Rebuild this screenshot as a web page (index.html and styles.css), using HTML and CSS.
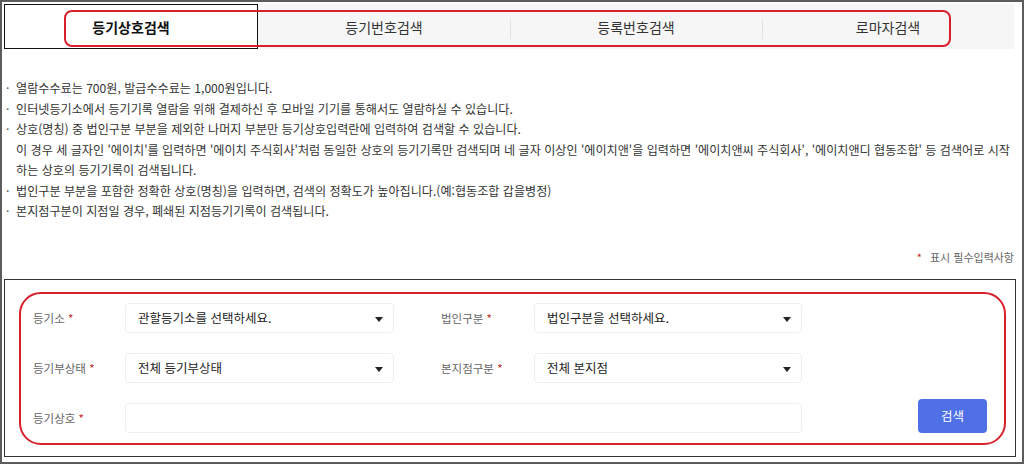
FILE: index.html
```html
<!DOCTYPE html>
<html lang="ko">
<head>
<meta charset="utf-8">
<title>등기상호검색</title>
<link rel="stylesheet" href="styles.css">
</head>
<body>
<div class="frame">
  <div class="tabs">
    <div class="tab active">등기상호검색</div>
    <div class="tab">등기번호검색</div>
    <div class="tab">등록번호검색</div>
    <div class="tab">로마자검색</div>
    <div class="annot annot-tabs"></div>
  </div>

  <ul class="notes">
    <li>열람수수료는 700원, 발급수수료는 1,000원입니다.</li>
    <li>인터넷등기소에서 등기기록 열람을 위해 결제하신 후 모바일 기기를 통해서도 열람하실 수 있습니다.</li>
    <li>상호(명칭) 중 법인구분 부분을 제외한 나머지 부분만 등기상호입력란에 입력하여 검색할 수 있습니다.<br>이 경우 세 글자인 '에이치'를 입력하면 '에이치 주식회사'처럼 동일한 상호의 등기기록만 검색되며 네 글자 이상인 '에이치앤'을 입력하면 '에이치앤씨 주식회사', '에이치앤디 협동조합' 등 검색어로 시작하는 상호의 등기기록이 검색됩니다.</li>
    <li>법인구분 부분을 포함한 정확한 상호(명칭)을 입력하면, 검색의 정확도가 높아집니다.(예:협동조합 갑을병정)</li>
    <li>본지점구분이 지점일 경우, 폐쇄된 지점등기기록이 검색됩니다.</li>
  </ul>

  <p class="req"><span class="star">*</span> 표시 필수입력사항</p>

  <div class="form">
    <div class="grid">
      <div class="label c1">등기소 <span class="star">*</span></div>
      <div class="select c2">관할등기소를 선택하세요.<span class="caret"></span></div>
      <div class="label c4">법인구분 <span class="star">*</span></div>
      <div class="select c5">법인구분을 선택하세요.<span class="caret"></span></div>

      <div class="label c1">등기부상태 <span class="star">*</span></div>
      <div class="select c2">전체 등기부상태<span class="caret"></span></div>
      <div class="label c4">본지점구분 <span class="star">*</span></div>
      <div class="select c5">전체 본지점<span class="caret"></span></div>

      <div class="label c1">등기상호 <span class="star">*</span></div>
      <div class="input wide"></div>
      <button class="btn" type="button">검색</button>
    </div>
    <div class="annot annot-form"></div>
  </div>
</div>
</body>
</html>
```

FILE: styles.css
```css
* { box-sizing: border-box; }
html, body { margin: 0; padding: 0; background: #fff; }
body {
  font-family: "Noto Sans CJK KR", "Noto Sans", sans-serif;
  color: #333;
}
.frame {
  width: 1024px;
  height: 464px;
  border: 2px solid #5c5c5c;
  padding: 2px 8px 0 2px;
  overflow: hidden;
}

/* tabs */
.tabs {
  position: relative;
  display: flex;
  height: 45px;
  background: #f6f6f6;
}
.tab {
  flex: 1;
  display: flex;
  align-items: center;
  justify-content: center;
  font-size: 14px;
  color: #333;
  position: relative;
}
.tab + .tab + .tab::before {
  content: "";
  position: absolute;
  left: 0;
  top: 15px;
  height: 20px;
  border-left: 1px solid #e2e2e2;
}
.tab.active {
  background: #fff;
  border: 1px solid #111;
  font-weight: 700;
  color: #111;
}

.annot {
  position: absolute;
  border: 2px solid #d8202a;
  pointer-events: none;
}
.annot-tabs {
  left: 60px;
  top: 6px;
  width: 887px;
  height: 37px;
  border-radius: 8px;
}

/* notes */
.notes {
  list-style: none;
  margin: 29px 0 0 0;
  padding: 0 0 0 12px;
  font-size: 12.1px;
  line-height: 20.5px;
  color: #333;
}
.notes li {
  position: relative;
}
.notes li::before {
  content: "·";
  position: absolute;
  left: -10px;
  top: 0;
  color: #555;
}

.req {
  margin: 25px 0 0 0;
  text-align: right;
  font-size: 11px;
  line-height: 20px;
  color: #666;
}
.star { color: #c0262d; margin-right: 5px; }
.label .star { margin-right: 0; margin-left: 0; }

/* form */
.form {
  position: relative;
  margin-top: 12px;
  width: 1012px;
  height: 178px;
  border: 1px solid #333;
  padding: 23px 0 0 28px;
}
.grid {
  display: grid;
  grid-template-columns: 92px 269px 47px 93px 268px 116px 69px;
  grid-auto-rows: 30px;
  row-gap: 20px;
  align-items: center;
}
.c1 { grid-column: 1; }
.c2 { grid-column: 2; }
.c4 { grid-column: 4; }
.c5 { grid-column: 5; }
.label {
  font-size: 11.5px;
  color: #666;
}
.select, .input {
  height: 30px;
  border: 1px solid #eeeeee;
  border-radius: 4px;
  background: #fff;
  font-size: 12.5px;
  color: #222;
  padding: 0 0 0 12px;
  display: flex;
  align-items: center;
  position: relative;
}
.caret {
  position: absolute;
  right: 10px;
  top: 13px;
  width: 0;
  height: 0;
  border-left: 4px solid transparent;
  border-right: 4px solid transparent;
  border-top: 5px solid #222;
}
.wide { grid-column: 2 / 6; }
.btn {
  grid-column: 7;
  align-self: end;
  margin-top: -4px;
  height: 34px;
  width: 69px;
  border: none;
  border-radius: 4px;
  background: #5070e6;
  color: #fff;
  font-family: inherit;
  font-size: 12.5px;
  padding: 0;
}
.annot-form {
  left: 14px;
  top: 12px;
  width: 987px;
  height: 153px;
  border-radius: 22px;
}
```
